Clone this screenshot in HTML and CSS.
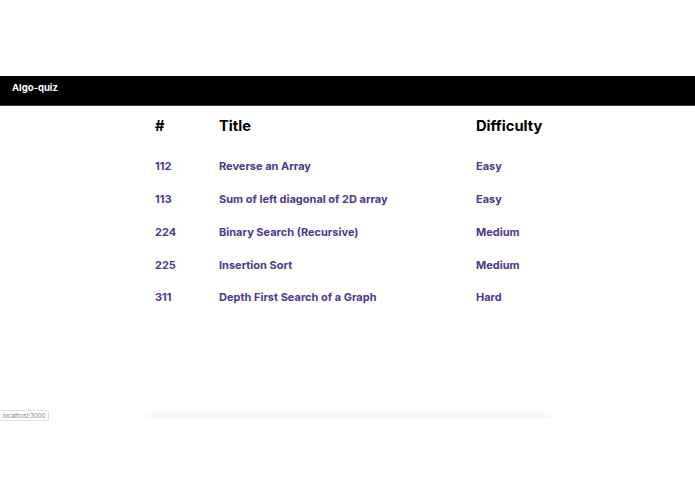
FILE: index.html
```html
<!DOCTYPE html>
<html>
<head>
<meta charset="utf-8">
<link rel="stylesheet" href="styles.css">
</head>
<body>
<div class="top-space"></div>
<nav class="navbar"><span class="brand">Algo-quiz</span></nav>
<main class="content">
  <div class="table">
    <div class="row head">
      <div>#</div><div>Title</div><div>Difficulty</div>
    </div>
    <div class="row item"><div>112</div><div>Reverse an Array</div><div>Easy</div></div>
    <div class="row item"><div>113</div><div>Sum of left diagonal of 2D array</div><div>Easy</div></div>
    <div class="row item"><div>224</div><div>Binary Search (Recursive)</div><div>Medium</div></div>
    <div class="row item"><div>225</div><div>Insertion Sort</div><div>Medium</div></div>
    <div class="row item"><div>311</div><div>Depth First Search of a Graph</div><div>Hard</div></div>
  </div>
  <div class="card"></div>
</main>
<div class="status">localhost:3000</div>
</body>
</html>
```
FILE: styles.css
```css
html, body {
  margin: 0;
  padding: 0;
  background: #fff;
  font-family: Inter, "Liberation Sans", sans-serif;
}
body {
  height: 494px;
  overflow: hidden;
  position: relative;
}
.top-space {
  height: 76px;
}
.navbar {
  height: 30px;
  background: #000;
  border-bottom: 1px solid #3a3a3a;
  box-sizing: border-box;
  padding: 6px 0 0 12px;
}
.brand {
  display: block;
  color: #fff;
  font-weight: 700;
  font-size: 9.5px;
  line-height: 12px;
}
.content {
  padding-left: 143px;
  width: 412px;
}
.table {
  padding-top: 4px;
}
.row {
  display: grid;
  grid-template-columns: 64px 257px 1fr;
  padding-left: 12px;
  align-items: center;
}
.head {
  height: 32px;
  font-size: 14.7px;
  font-weight: 700;
  color: #000;
  margin-bottom: 8px;
}
.item {
  height: 32.75px;
  font-size: 11px;
  font-weight: 700;
  color: #51378f;
}
.card {
  margin-top: 104px;
  height: 80px;
  background: #fff;
  box-shadow: 0 -7px 10px -5px rgba(0, 0, 0, 0.07);
}
.status {
  position: absolute;
  left: 0;
  top: 410px;
  font-size: 6px;
  line-height: 9px;
  padding: 0 3px;
  color: #6f8378;
  background: #fff;
  border: 1px solid #d8e4dc;
  border-left: none;
  border-radius: 0 2px 2px 0;
}
```
